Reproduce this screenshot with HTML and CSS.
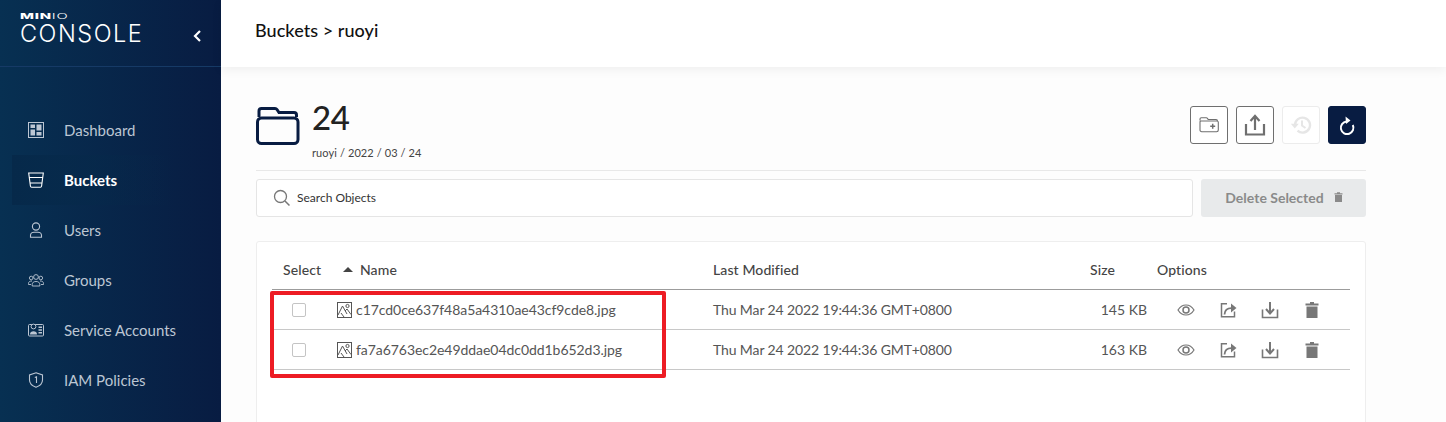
FILE: index.html
```html
<!DOCTYPE html>
<html lang="en">

<head>
    <meta charset="UTF-8">
    <meta name="viewport" content="width=device-width, initial-scale=1.0">
    <title>MinIO Console</title>
    <link rel="stylesheet" href="styles.css">
</head>

<body>
    <aside class="sidebar">
        <div class="brand">
            <div class="brand-text">
                <div class="brand-top"><b>MIN</b><span>IO</span></div>
                <div class="brand-name">CONSOLE</div>
            </div>
            <svg class="collapse" width="12" height="16" viewBox="0 0 12 16"><path d="M9 3 L4 8 L9 13" fill="none" stroke="#fff" stroke-width="2.200"/></svg>
        </div>
        <nav class="nav">
            <a class="nav-item">
                <svg class="nav-icon" viewBox="0 0 16 16"><rect x="0.500" y="0.500" width="15" height="15" fill="none" stroke="currentColor"/><path d="M2.500 2.500h4.500v3.500h-4.500zM8.500 2.500h5v6h-5zM2.500 7.500h4.500v6h-4.500zM8.500 10h5v3.500h-5z" fill="currentColor"/></svg>
                Dashboard
            </a>
            <a class="nav-item active">
                <svg class="nav-icon" viewBox="0 0 16 16"><path d="M0.700 1h14.600l-1.700 13c-.1.800-.5 1.200-1.200 1.200H3.600c-.7 0-1.100-.4-1.200-1.200zM1.400 5.500h13.200M2.200 11h11.600" fill="none" stroke="currentColor" stroke-width="1.100"/></svg>
                Buckets
            </a>
            <a class="nav-item">
                <svg class="nav-icon" viewBox="0 0 16 16"><circle cx="8" cy="4.500" r="3.600" fill="none" stroke="currentColor" stroke-width="1.100"/><path d="M2.500 15.200v-2c0-2 2-3 3.500-3h4c1.500 0 3.500 1 3.500 3v2z" fill="none" stroke="currentColor" stroke-width="1.100"/></svg>
                Users
            </a>
            <a class="nav-item">
                <svg class="nav-icon" viewBox="0 0 16 16"><g fill="none" stroke="currentColor" stroke-width="0.900"><circle cx="8" cy="5" r="2.400"/><circle cx="3.200" cy="6" r="1.800"/><circle cx="12.800" cy="6" r="1.800"/><path d="M4.200 14v-1.500c0-2 1.500-3 3.800-3s3.800 1 3.800 3V14zM3 12.500H0.500v-1c0-1.500 1-2.500 3.500-2.500M13 12.500h2.500v-1c0-1.500-1-2.500-3.500-2.500"/></g></svg>
                Groups
            </a>
            <a class="nav-item">
                <svg class="nav-icon" viewBox="0 0 16 16"><rect x="0.500" y="2.500" width="15" height="11.500" rx="1" fill="none" stroke="currentColor"/><circle cx="5.500" cy="4.500" r="2.400" fill="#072a4c" stroke="currentColor"/><path d="M2 12.500c0-2 1.500-3.200 3.500-3.200s3.500 1.200 3.500 3.200z" fill="currentColor"/><path d="M10.500 4.500h3.500v1.500h-3.500zM10.500 7.200h3.500v1.500h-3.500zM10.500 10h3.500v1.500h-3.500z" fill="currentColor"/></svg>
                Service Accounts
            </a>
            <a class="nav-item">
                <svg class="nav-icon" viewBox="0 0 16 16"><path d="M8 0.800 L14.500 3v5c0 3.500-3 6-6.500 7.300C4.500 14 1.500 11.500 1.500 8V3z" fill="none" stroke="currentColor" stroke-width="1.100"/><path d="M6.800 5.500 L8.500 4.800V11" fill="none" stroke="currentColor" stroke-width="1.100"/></svg>
                IAM Policies
            </a>
        </nav>
    </aside>

    <div class="main">
        <header class="topbar">Buckets &gt; ruoyi</header>

        <section class="content">
            <div class="title-row">
                <svg class="folder" width="44" height="40" viewBox="0 0 44 40"><path d="M3 11V5c0-1.500 1-2.500 2.500-2.500H19c1 0 1.500.3 2 1l2 3H38c1.500 0 2.500 1 2.500 2.500v2" fill="none" stroke="#081c42" stroke-width="3"/><rect x="1.500" y="12" width="40.500" height="25.500" rx="4" fill="none" stroke="#081c42" stroke-width="3"/></svg>
                <div class="title-text">
                    <h1>24</h1>
                    <p>ruoyi / 2022 / 03 / 24</p>
                </div>
                <div class="actions">
                    <button class="icon-btn">
                        <svg width="22" height="22" viewBox="0 0 22 22"><path d="M2 6.500V5c0-.8.600-1.300 1.300-1.300h5c.6 0 .9.300 1.300.9l.6.900h7.800c.8 0 1.500.6 1.500 1.400M2 8c0-.6.500-1 1-1h16c.8 0 1.300.5 1.300 1.300v7.700c0 1-.7 1.700-1.700 1.700H3.700C2.700 17.700 2 17 2 16z" fill="none" stroke="#6f6f6f" stroke-width="1.100"/><path d="M14.700 9.800v5M12.200 12.300h5" stroke="#6f6f6f" stroke-width="1.500"/></svg>
                    </button>
                    <button class="icon-btn">
                        <svg width="22" height="24" viewBox="0 0 22 24"><path d="M11 17V4M6.500 8 L11 3 L15.500 8" fill="none" stroke="#6f6f6f" stroke-width="2.200"/><path d="M2 11v10.500h18V11" fill="none" stroke="#6f6f6f" stroke-width="2.200"/></svg>
                    </button>
                    <button class="icon-btn disabled">
                        <svg width="22" height="22" viewBox="0 0 22 22"><path d="M5 11a7.500 7.500 0 1 1 2.500 5.700" fill="none" stroke="#e6e6e6" stroke-width="2.400"/><path d="M0.800 9.800h8L4.800 14.500z" fill="#e6e6e6"/><path d="M12 6.500v5l3.500 2.500" fill="none" stroke="#e6e6e6" stroke-width="2"/></svg>
                    </button>
                    <button class="icon-btn primary">
                        <svg width="20" height="22" viewBox="0 0 20 22"><path d="M14.800 9a6.300 6.300 0 1 1-6.300-3.500" fill="none" transform="translate(1 2)" stroke="#fff" stroke-width="2"/><path d="M8.500 2.500 L13.500 6.500 L9 10z" fill="#fff"/></svg>
                    </button>
                </div>
            </div>

            <div class="search-row">
                <div class="search">
                    <svg width="18" height="18" viewBox="0 0 18 18"><circle cx="7.500" cy="7.500" r="6" fill="none" stroke="#777" stroke-width="1.300"/><path d="M12 12 L16.500 16.500" stroke="#777" stroke-width="1.500"/></svg>
                    <span>Search Objects</span>
                </div>
                <button class="delete-btn">
                    Delete Selected
                    <svg width="9" height="10" viewBox="0 0 9 10"><path d="M0.500 1.200H3V.3h3v.9h2.500v1.200H.5zM1 3h7v7H1z" fill="#8a8a8a"/></svg>
                </button>
            </div>

            <div class="card">
                <div class="row head">
                    <div class="cell-select">Select</div>
                    <div class="cell-name"><i class="sort"></i>Name</div>
                    <div>Last Modified</div>
                    <div>Size</div>
                    <div>Options</div>
                </div>
                <div class="row">
                    <div class="cell-select"><span class="check"></span></div>
                    <div class="cell-file">
                        <svg class="file-icon" width="15" height="16" viewBox="0 0 15 16"><rect x="0.500" y="0.500" width="14" height="15" fill="none" stroke="#555"/><circle cx="10.500" cy="4" r="1.600" fill="none" stroke="#555"/><path d="M1 13 L5.500 4 L10 12 M8 9 L10 7 L14 12.500 M4 11 L7 15" fill="none" stroke="#555"/></svg>
                        c17cd0ce637f48a5a4310ae43cf9cde8.jpg
                    </div>
                    <div class="cell-date">Thu Mar 24 2022 19:44:36 GMT+0800</div>
                    <div class="cell-size">145 KB</div>
                    <div class="cell-options">
                        <svg width="18" height="18" viewBox="0 0 18 18"><path d="M1 9c2-3.300 4.700-5 8-5s6 1.700 8 5c-2 3.300-4.700 5-8 5s-6-1.700-8-5z" fill="none" stroke="#777" stroke-width="1.200"/><circle cx="9" cy="9" r="3" fill="none" stroke="#777" stroke-width="1.500"/></svg>
                        <svg width="18" height="18" viewBox="0 0 18 18"><path d="M8 2.800H2.500v13h13V10.500" fill="none" stroke="#777" stroke-width="1.500"/><path d="M5.500 13.500c.3-4 3-6.300 7-6.300" fill="none" stroke="#777" stroke-width="1.800"/><path d="M12 2.500 L17.500 7 L12 11.500z" fill="#777"/></svg>
                        <svg width="18" height="18" viewBox="0 0 18 18"><path d="M9 1v11M5 8 L9 12.500 L13 8" fill="none" stroke="#777" stroke-width="2"/><path d="M1.500 8.500v8h15v-8" fill="none" stroke="#777" stroke-width="1.600"/></svg>
                        <svg width="18" height="18" viewBox="0 0 18 18"><path d="M2.500 2.500h4.500V1h4v1.500h4.500v2H2.500zM3.500 5.500h11V17H3.500z" fill="#777"/></svg>
                    </div>
                </div>
                <div class="row">
                    <div class="cell-select"><span class="check"></span></div>
                    <div class="cell-file">
                        <svg class="file-icon" width="15" height="16" viewBox="0 0 15 16"><rect x="0.500" y="0.500" width="14" height="15" fill="none" stroke="#555"/><circle cx="10.500" cy="4" r="1.600" fill="none" stroke="#555"/><path d="M1 13 L5.500 4 L10 12 M8 9 L10 7 L14 12.500 M4 11 L7 15" fill="none" stroke="#555"/></svg>
                        fa7a6763ec2e49ddae04dc0dd1b652d3.jpg
                    </div>
                    <div class="cell-date">Thu Mar 24 2022 19:44:36 GMT+0800</div>
                    <div class="cell-size">163 KB</div>
                    <div class="cell-options">
                        <svg width="18" height="18" viewBox="0 0 18 18"><path d="M1 9c2-3.300 4.700-5 8-5s6 1.700 8 5c-2 3.300-4.700 5-8 5s-6-1.700-8-5z" fill="none" stroke="#777" stroke-width="1.200"/><circle cx="9" cy="9" r="3" fill="none" stroke="#777" stroke-width="1.500"/></svg>
                        <svg width="18" height="18" viewBox="0 0 18 18"><path d="M8 2.800H2.500v13h13V10.500" fill="none" stroke="#777" stroke-width="1.500"/><path d="M5.500 13.500c.3-4 3-6.300 7-6.300" fill="none" stroke="#777" stroke-width="1.800"/><path d="M12 2.500 L17.500 7 L12 11.500z" fill="#777"/></svg>
                        <svg width="18" height="18" viewBox="0 0 18 18"><path d="M9 1v11M5 8 L9 12.500 L13 8" fill="none" stroke="#777" stroke-width="2"/><path d="M1.500 8.500v8h15v-8" fill="none" stroke="#777" stroke-width="1.600"/></svg>
                        <svg width="18" height="18" viewBox="0 0 18 18"><path d="M2.500 2.500h4.500V1h4v1.500h4.500v2H2.500zM3.500 5.500h11V17H3.500z" fill="#777"/></svg>
                    </div>
                </div>
            </div>
        </section>
    </div>

    <div class="highlight"></div>
</body>

</html>
```

FILE: styles.css
```css
* {
    box-sizing: border-box;
}

html,
body {
    height: 100%;
}

body {
    font-family: 'Lato', sans-serif;
    margin: 0;
    display: flex;
    overflow: hidden;
    background: #fdfdfd;
    color: #393939;
}

.sidebar {
    width: 221px;
    flex-shrink: 0;
    background: linear-gradient(90deg, #073052, #081c42);
    color: #fff;
}

.brand {
    height: 67px;
    border-bottom: 1px solid #163a66;
    padding: 12px 18px 0 20px;
    display: flex;
    justify-content: space-between;
}

.brand-top {
    font-family: 'Inter', sans-serif;
    font-size: 8px;
    line-height: 8px;
    font-weight: 300;
    transform: scaleX(1.85);
    transform-origin: left;
    letter-spacing: 0.4px;
}

.brand-top b {
    font-weight: 800;
}

.brand-name {
    margin-top: 2px;
    font-family: 'Inter', sans-serif;
    font-size: 23.500px;
    line-height: 24px;
    font-weight: 300;
    letter-spacing: 1.500px;
}

.collapse {
    margin-top: 16px;
}

.nav {
    padding: 38px 0 0 12px;
}

.nav-item {
    height: 50px;
    display: flex;
    align-items: center;
    gap: 20px;
    padding-left: 16px;
    font-size: 15px;
    color: #bcc6d3;
}

.nav-item.active {
    color: #fff;
    font-weight: bold;
    background: linear-gradient(90deg, #06294a, rgba(6, 41, 74, 0));
    width: 160px;
}

.nav-icon {
    width: 16px;
    height: 16px;
    flex-shrink: 0;
}

.main {
    flex: 1;
    min-width: 0;
}

.topbar {
    height: 67px;
    background: #fff;
    box-shadow: 0px 3px 10px rgba(0, 0, 0, 0.06);
    padding: 19px 0 0 34px;
    font-size: 18px;
    line-height: 22px;
    font-weight: 500;
    color: #111;
    letter-spacing: 0.05px;
}

.content {
    padding: 31px 80px 0 35px;
}

.title-row {
    display: flex;
    height: 73px;
    border-bottom: 1px solid #e8e8e8;
}

.folder {
    margin: 8px 12px 0 0;
    flex-shrink: 0;
}

.title-text h1 {
    margin: 0;
    font-size: 33px;
    line-height: 38px;
    font-weight: 500;
    color: #222;
    letter-spacing: -0.5px;
}

.title-text p {
    margin: 10px 0 0;
    font-size: 11px;
    line-height: 14px;
    color: #444;
    letter-spacing: 0.1px;
}

.actions {
    margin-left: auto;
    display: flex;
    gap: 8px;
    padding-top: 8px;
}

.icon-btn {
    width: 38px;
    height: 38px;
    padding: 0;
    display: flex;
    align-items: center;
    justify-content: center;
    background: #fff;
    border: 1px solid #6f6f6f;
    border-radius: 3px;
}

.icon-btn.disabled {
    border-color: #ececec;
}

.icon-btn.primary {
    background: #081c42;
    border-color: #081c42;
}

.search-row {
    display: flex;
    gap: 8px;
    margin-top: 8px;
}

.search {
    flex: 1;
    height: 38px;
    background: #fff;
    border: 1px solid #e5e5e5;
    border-radius: 3px;
    display: flex;
    align-items: center;
    gap: 6px;
    padding-left: 16px;
    font-size: 12px;
    line-height: 14px;
    color: #333;
}

.delete-btn {
    width: 165px;
    height: 38px;
    padding: 0 0 2px 1px;
    font-family: 'Lato', sans-serif;
    font-size: 14px;
    font-weight: bold;
    color: #8a8a8a;
    background: #e8eaeb;
    border: none;
    border-radius: 3px;
    display: flex;
    align-items: center;
    justify-content: center;
    gap: 10px;
}

.card {
    margin-top: 24px;
    height: 200px;
    background: #fff;
    border: 1px solid #eeeeee;
    border-radius: 3px;
    padding: 8px 15px 0;
}

.row {
    display: grid;
    grid-template-columns: 65px 376px 377px 67px 1fr;
    align-items: center;
    height: 40px;
    border-bottom: 1px solid #c8c8c8;
    font-size: 14px;
    color: #555;
}

.row.head {
    border-bottom-color: #9c9c9c;
    font-weight: 500;
    color: #444;
    letter-spacing: 0.1px;
}

.cell-select {
    padding-left: 11px;
}

.head .cell-select {
    white-space: nowrap;
}

.cell-name {
    display: flex;
    align-items: center;
    gap: 7px;
    padding-left: 6px;
}

.sort {
    width: 0;
    height: 0;
    border-left: 5px solid transparent;
    border-right: 5px solid transparent;
    border-bottom: 5px solid #444;
}

.check {
    display: block;
    width: 14px;
    height: 14px;
    margin-left: 9px;
    background: #fff;
    border: 1px solid #c4c4c4;
    border-radius: 2px;
}

.cell-file {
    display: flex;
    align-items: center;
    gap: 4px;
    letter-spacing: -0.05px;
}

.cell-date {
    letter-spacing: -0.12px;
}

.cell-size {
    text-align: right;
    padding-right: 10px;
}

.cell-options {
    display: flex;
    gap: 24px;
    padding-left: 20px;
}

/* annotation drawn over the screenshot */
.highlight {
    position: absolute;
    left: 270px;
    top: 291px;
    width: 396px;
    height: 87px;
    border: 4px solid #ed1c24;
    border-radius: 2px;
}
```
